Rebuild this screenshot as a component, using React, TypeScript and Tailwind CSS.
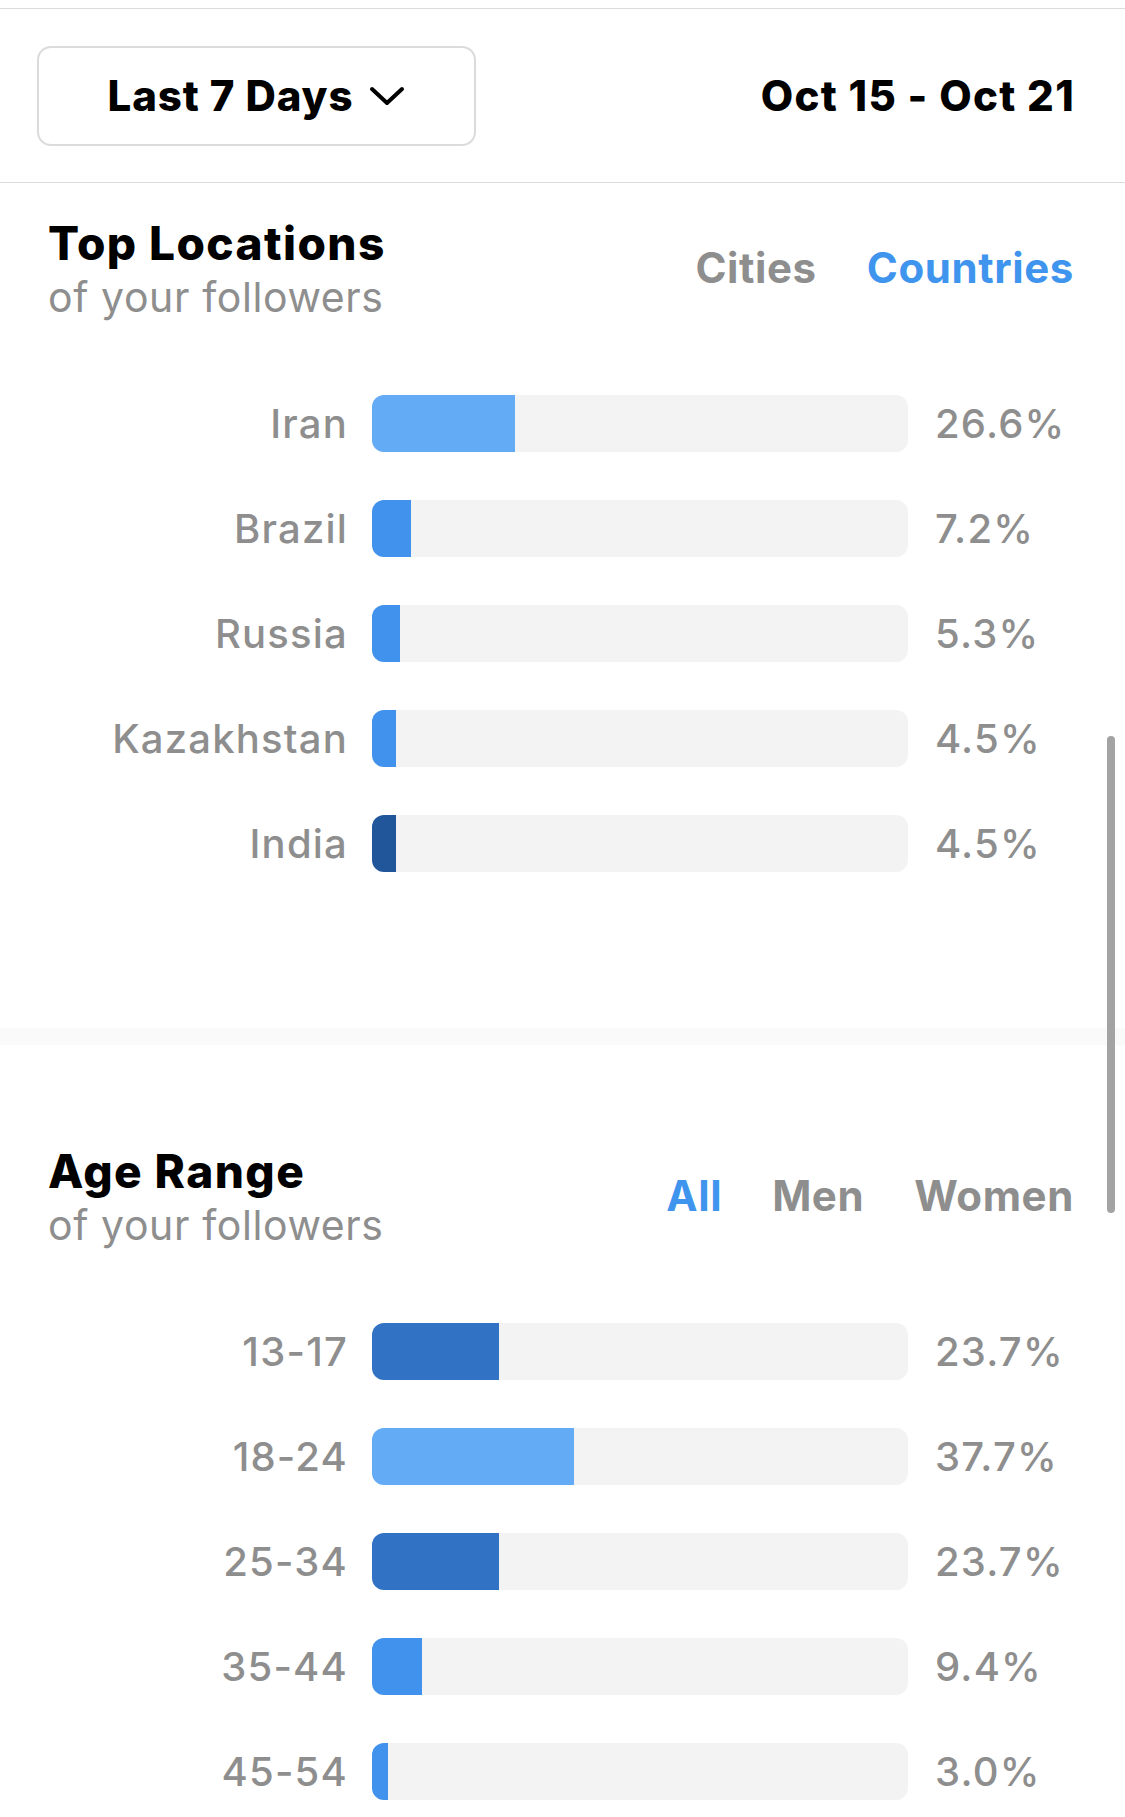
import React from "react";

const FONT = { fontFamily: 'Inter, "Noto Sans", "Liberation Sans", sans-serif' };

type Row = { label: string; pct: number; color: string };

const locations: Row[] = [
  { label: "Iran", pct: 26.6, color: "#64abf6" },
  { label: "Brazil", pct: 7.2, color: "#4192ec" },
  { label: "Russia", pct: 5.3, color: "#4192ec" },
  { label: "Kazakhstan", pct: 4.5, color: "#4192ec" },
  { label: "India", pct: 4.5, color: "#22569b" },
];

const ages: Row[] = [
  { label: "13-17", pct: 23.7, color: "#3172c4" },
  { label: "18-24", pct: 37.7, color: "#64abf6" },
  { label: "25-34", pct: 23.7, color: "#3172c4" },
  { label: "35-44", pct: 9.4, color: "#4192ec" },
  { label: "45-54", pct: 3.0, color: "#4192ec" },
];

function Bars({ rows }: { rows: Row[] }) {
  return (
    <div className="flex flex-col gap-[48px]">
      {rows.map((r) => (
        <div key={r.label} className="flex items-center">
          <div className="w-[348px] text-right text-[40px] leading-[48px] font-medium tracking-[1.2px] text-[#8e8e8e]">
            {r.label}
          </div>
          <div className="ml-[24px] w-[536px] h-[57px] rounded-[12px] bg-[#f3f3f3] overflow-hidden flex">
            <div className="h-full" style={{ width: `${r.pct}%`, backgroundColor: r.color }} />
          </div>
          <div className="ml-[27px] text-[40px] leading-[48px] font-medium tracking-[1.2px] text-[#8e8e8e]">
            {r.pct.toFixed(1)}%
          </div>
        </div>
      ))}
    </div>
  );
}

function SectionHeader({ title, tabs, active }: { title: string; tabs: string[]; active: string }) {
  return (
    <div className="flex justify-between pl-[48px] pr-[51px]">
      <div className="flex flex-col">
        <div className="text-[46px] leading-[52px] font-extrabold text-black tracking-[1.4px]">{title}</div>
        <div className="mt-[3px] text-[41px] leading-[50px] tracking-[0.6px] text-[#8e8e8e]">of your followers</div>
      </div>
      <div className="flex gap-[50px] mt-[26px] h-[50px]">
        {tabs.map((t) => (
          <div
            key={t}
            className={
              "text-[42px] leading-[50px] font-bold tracking-[0.6px] " +
              (t === active ? "text-[#3f95ee]" : "text-[#8e8e8e]")
            }
          >
            {t}
          </div>
        ))}
      </div>
    </div>
  );
}

export default function App() {
  return (
    <div className="relative w-[1125px] h-[1817px] overflow-hidden bg-white" style={FONT}>
      <div className="h-[8px]" />
      <div className="h-[175px] border-y border-[#dbdbdb] flex items-center justify-between pl-[37px] pr-[50px]">
        <div className="w-[439px] h-[100px] rounded-[14px] border-2 border-[#dbdbdb] flex items-center justify-center gap-[16px]">
          <span className="text-[42px] font-extrabold tracking-[0.9px] text-black">Last 7 Days</span>
          <svg width="36" height="20" viewBox="0 0 36 20" fill="none">
            <polyline points="3,3 18,17 33,3" stroke="black" strokeWidth="4" strokeLinecap="round" strokeLinejoin="round" />
          </svg>
        </div>
        <div className="text-[42px] font-extrabold tracking-[1.3px] text-black">Oct 15 - Oct 21</div>
      </div>

      <div className="pt-[34px] pb-[156px]">
        <SectionHeader title="Top Locations" tabs={["Cities", "Countries"]} active="Countries" />
        <div className="mt-[73px]">
          <Bars rows={locations} />
        </div>
      </div>

      <div className="h-[17px] bg-[#fafafa]" />

      <div className="pt-[100px]">
        <SectionHeader title="Age Range" tabs={["All", "Men", "Women"]} active="All" />
        <div className="mt-[73px]">
          <Bars rows={ages} />
        </div>
      </div>

      <div className="absolute right-[10px] top-[736px] w-[8px] h-[477px] rounded-full bg-[#a3a3a3]" />
    </div>
  );
}
